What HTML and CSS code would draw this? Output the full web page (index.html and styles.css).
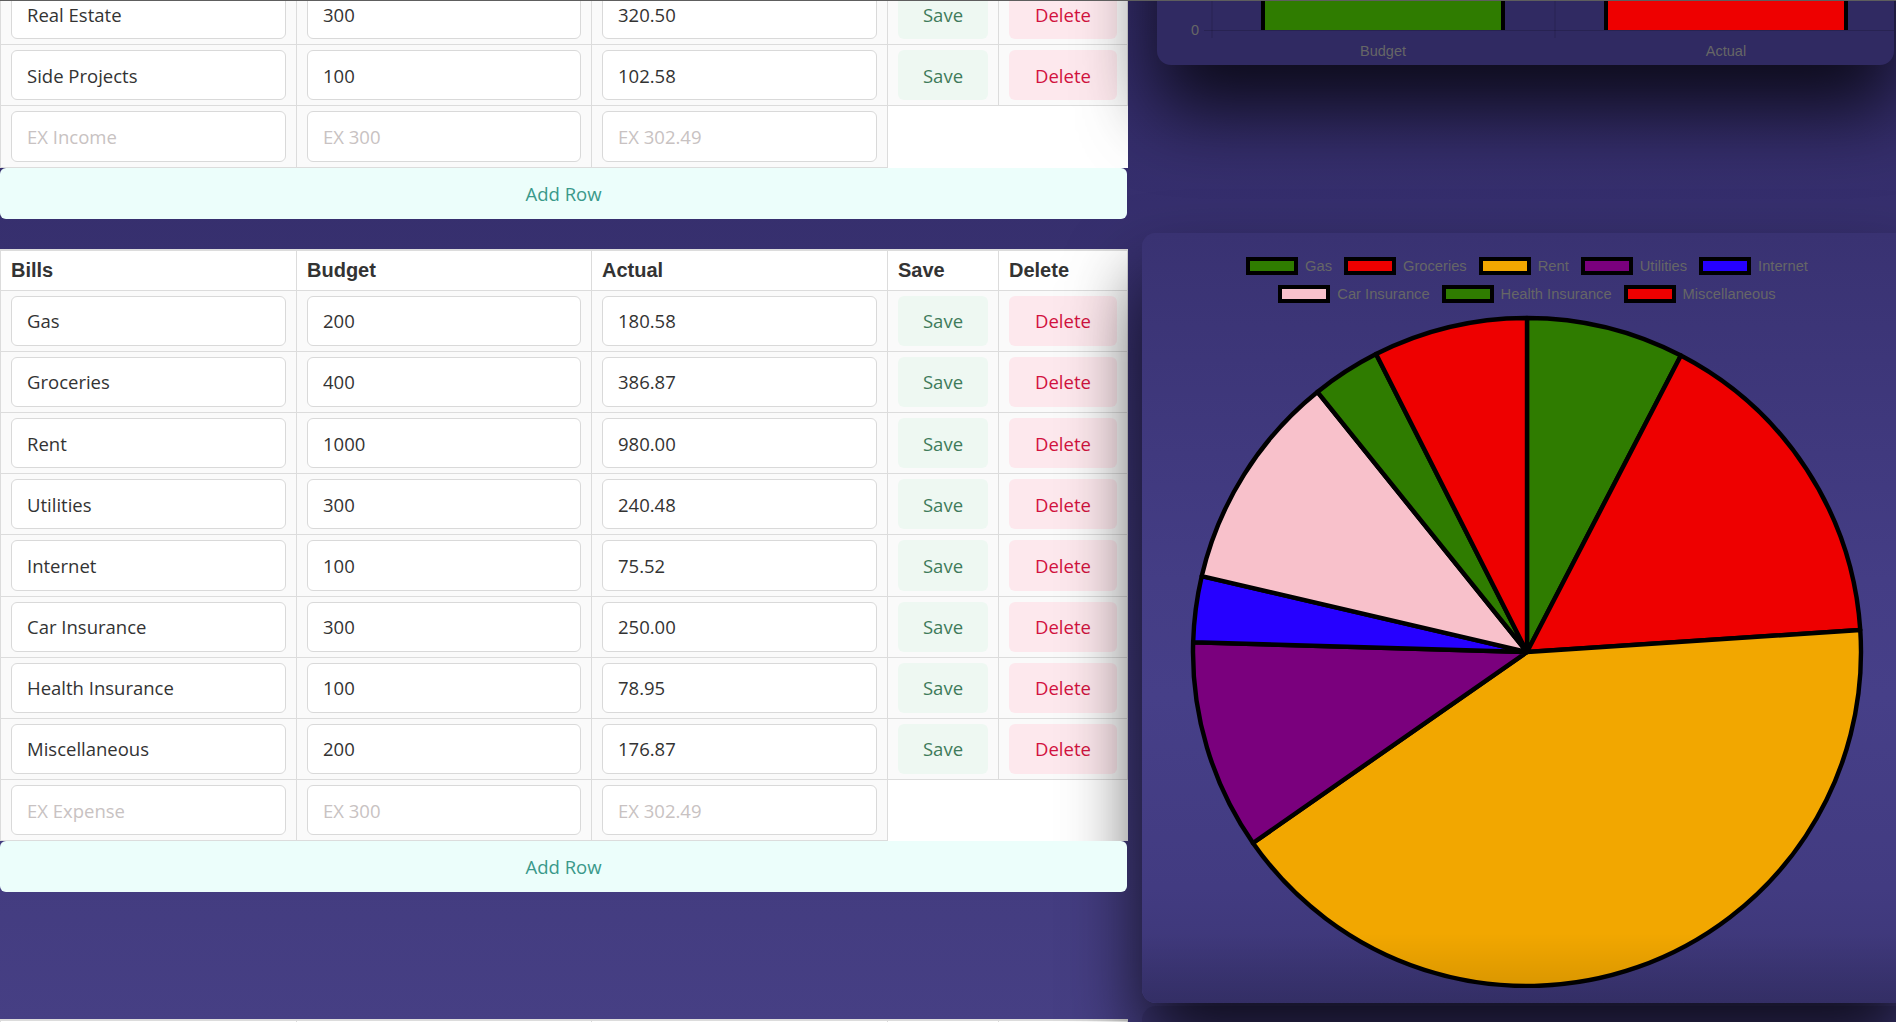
FILE: index.html
```html
<!DOCTYPE html>
<html lang="en">
<head>
<meta charset="utf-8">
<title>Budget</title>
<link rel="stylesheet" href="styles.css">
</head>
<body>
<div class="page">
  <section class="left">
    <table class="budget-table">
      <colgroup><col class="c1"><col class="c2"><col class="c3"><col class="c4"><col class="c5"></colgroup>
      <tbody>
        <tr>
          <td><input class="field" value="Real Estate"></td>
          <td><input class="field" value="300"></td>
          <td><input class="field" value="320.50"></td>
          <td><button class="btn btn-save">Save</button></td>
          <td><button class="btn btn-delete">Delete</button></td>
        </tr>
        <tr>
          <td><input class="field" value="Side Projects"></td>
          <td><input class="field" value="100"></td>
          <td><input class="field" value="102.58"></td>
          <td><button class="btn btn-save">Save</button></td>
          <td><button class="btn btn-delete">Delete</button></td>
        </tr>
        <tr>
          <td><input class="field" placeholder="EX Income"></td>
          <td><input class="field" placeholder="EX 300"></td>
          <td><input class="field" placeholder="EX 302.49"></td>
          <td class="blank" colspan="2"></td>
        </tr>
      </tbody>
    </table>
    <button class="add-row">Add Row</button>

    <table class="budget-table bills-table">
      <colgroup><col class="c1"><col class="c2"><col class="c3"><col class="c4"><col class="c5"></colgroup>
      <thead>
        <tr><th>Bills</th><th>Budget</th><th>Actual</th><th>Save</th><th>Delete</th></tr>
      </thead>
      <tbody>
        <tr>
          <td><input class="field" value="Gas"></td>
          <td><input class="field" value="200"></td>
          <td><input class="field" value="180.58"></td>
          <td><button class="btn btn-save">Save</button></td>
          <td><button class="btn btn-delete">Delete</button></td>
        </tr>
        <tr>
          <td><input class="field" value="Groceries"></td>
          <td><input class="field" value="400"></td>
          <td><input class="field" value="386.87"></td>
          <td><button class="btn btn-save">Save</button></td>
          <td><button class="btn btn-delete">Delete</button></td>
        </tr>
        <tr>
          <td><input class="field" value="Rent"></td>
          <td><input class="field" value="1000"></td>
          <td><input class="field" value="980.00"></td>
          <td><button class="btn btn-save">Save</button></td>
          <td><button class="btn btn-delete">Delete</button></td>
        </tr>
        <tr>
          <td><input class="field" value="Utilities"></td>
          <td><input class="field" value="300"></td>
          <td><input class="field" value="240.48"></td>
          <td><button class="btn btn-save">Save</button></td>
          <td><button class="btn btn-delete">Delete</button></td>
        </tr>
        <tr>
          <td><input class="field" value="Internet"></td>
          <td><input class="field" value="100"></td>
          <td><input class="field" value="75.52"></td>
          <td><button class="btn btn-save">Save</button></td>
          <td><button class="btn btn-delete">Delete</button></td>
        </tr>
        <tr>
          <td><input class="field" value="Car Insurance"></td>
          <td><input class="field" value="300"></td>
          <td><input class="field" value="250.00"></td>
          <td><button class="btn btn-save">Save</button></td>
          <td><button class="btn btn-delete">Delete</button></td>
        </tr>
        <tr>
          <td><input class="field" value="Health Insurance"></td>
          <td><input class="field" value="100"></td>
          <td><input class="field" value="78.95"></td>
          <td><button class="btn btn-save">Save</button></td>
          <td><button class="btn btn-delete">Delete</button></td>
        </tr>
        <tr>
          <td><input class="field" value="Miscellaneous"></td>
          <td><input class="field" value="200"></td>
          <td><input class="field" value="176.87"></td>
          <td><button class="btn btn-save">Save</button></td>
          <td><button class="btn btn-delete">Delete</button></td>
        </tr>
        <tr>
          <td><input class="field" placeholder="EX Expense"></td>
          <td><input class="field" placeholder="EX 300"></td>
          <td><input class="field" placeholder="EX 302.49"></td>
          <td class="blank" colspan="2"></td>
        </tr>
      </tbody>
    </table>
    <button class="add-row">Add Row</button>

    <table class="budget-table next-table">
      <colgroup><col class="c1"><col class="c2"><col class="c3"><col class="c4"><col class="c5"></colgroup>
      <thead><tr><th>&nbsp;</th><th>&nbsp;</th><th>&nbsp;</th><th>&nbsp;</th><th>&nbsp;</th></tr></thead>
    </table>
  </section>

  <aside class="right">
    <div class="card bar-card">
      <svg class="bar-svg" width="737" height="300" viewBox="0 0 737 300">
        <line x1="55" y1="0" x2="55" y2="273" class="grid"/>
        <line x1="398" y1="0" x2="398" y2="273" class="grid"/>
        <line x1="47" y1="265.5" x2="737" y2="265.5" class="grid"/>
        <rect x="104" y="0" width="244" height="265" fill="#000"/>
        <rect x="108" y="0" width="236" height="265" fill="#2f7c00"/>
        <rect x="447" y="0" width="244" height="265" fill="#000"/>
        <rect x="451" y="0" width="236" height="265" fill="#ee0000"/>
        <text x="42" y="270" text-anchor="end" class="axis-text">0</text>
        <text x="226" y="291" text-anchor="middle" class="axis-text">Budget</text>
        <text x="569" y="291" text-anchor="middle" class="axis-text">Actual</text>
      </svg>
    </div>

    <div class="card pie-card">
      <div class="legend">
        <div class="legend-row">
          <span class="legend-item"><i class="swatch sw-green"></i>Gas</span>
          <span class="legend-item"><i class="swatch sw-red"></i>Groceries</span>
          <span class="legend-item"><i class="swatch sw-orange"></i>Rent</span>
          <span class="legend-item"><i class="swatch sw-purple"></i>Utilities</span>
          <span class="legend-item"><i class="swatch sw-blue"></i>Internet</span>
        </div>
        <div class="legend-row">
          <span class="legend-item"><i class="swatch sw-pink"></i>Car Insurance</span>
          <span class="legend-item"><i class="swatch sw-green"></i>Health Insurance</span>
          <span class="legend-item"><i class="swatch sw-red"></i>Miscellaneous</span>
        </div>
      </div>
      <svg class="pie-svg" width="770" height="680" viewBox="0 0 770 680">
        <g stroke="#000" stroke-width="4.4" stroke-linejoin="round" transform="translate(385 344) scale(1.006) translate(-385 -343)">
          <path d="M385 343 L385 11 A332 332 0 0 1 537.98 48.34 Z" fill="#2f7c00"/>
          <path d="M385 343 L537.98 48.34 A332 332 0 0 1 716.28 321.12 Z" fill="#ee0000"/>
          <path d="M385 343 L716.28 321.12 A332 332 0 0 1 112.61 532.82 Z" fill="#f2a700"/>
          <path d="M385 343 L112.61 532.82 A332 332 0 0 1 53.14 333.33 Z" fill="#7a007d"/>
          <path d="M385 343 L53.14 333.33 A332 332 0 0 1 61.70 267.51 Z" fill="#2600ff"/>
          <path d="M385 343 L61.70 267.51 A332 332 0 0 1 176.65 84.51 Z" fill="#f8c1cb"/>
          <path d="M385 343 L176.65 84.51 A332 332 0 0 1 234.93 46.85 Z" fill="#2f7c00"/>
          <path d="M385 343 L234.93 46.85 A332 332 0 0 1 385 11 Z" fill="#ee0000"/>
        </g>
      </svg>
    </div>

    <div class="card next-card"></div>
  </aside>
</div>
</body>
</html>
```

FILE: styles.css
```css
* {
  box-sizing: border-box;
}

html,
body {
  margin: 0;
  height: 1022px;
  overflow: hidden;
}

body {
  background: linear-gradient(180deg, #322b68 0%, #463f84 100%);
  border-top: 1px solid #5e5e5e;
  font-family: "Open Sans", "Noto Sans", sans-serif;
}

.page {
  display: grid;
  grid-template-columns: 1127px 769px;
  align-items: start;
}

/* ---------- left: tables ---------- */

.left {
  margin-top: -18px;
}

.budget-table {
  width: 1127px;
  table-layout: fixed;
  border-collapse: collapse;
  background: #fff;
}

.c1 { width: 296px; }
.c2 { width: 295px; }
.c3 { width: 296px; }
.c4 { width: 111px; }
.c5 { width: 129px; }

.budget-table td {
  border: 1px solid #dcdcdc;
  padding: 5px 10px;
  background: #fafafa;
}

.budget-table td.blank {
  border-left: 1px solid #dcdcdc;
  border-right: none;
  border-bottom: none;
  background: #fff;
}

.budget-table th {
  text-align: left;
  font: bold 20px/23px "Liberation Sans", Arial, sans-serif;
  color: #333;
  padding: 8px 10px;
  background: #fff;
  border: 1px solid #dcdcdc;
  border-top: 2px solid #dcdcdc;
}

.field {
  display: block;
  width: 100%;
  height: 50.2px;
  margin: 0;
  border: 1px solid #d9d9d9;
  border-radius: 6px;
  background: #fff;
  padding: 0 15px;
  font: 18.5px "Open Sans", "Noto Sans", sans-serif;
  color: #333;
  outline: none;
}

.field::placeholder {
  color: #c8c2c2;
}

.btn {
  display: block;
  width: 100%;
  height: 50.2px;
  margin: 0;
  border: 0;
  border-radius: 6px;
  font: 18.5px "Open Sans", "Noto Sans", sans-serif;
  padding: 0;
}

.btn-save {
  background: #eef8f2;
  color: #3f7b5a;
}

.btn-delete {
  background: #fde8ed;
  color: #d2123e;
}

.add-row {
  position: relative;
  z-index: 2;
  display: block;
  width: 1127px;
  height: 51px;
  margin: 0;
  border: 0;
  border-radius: 6px;
  background: #ecfefb;
  color: #3a998a;
  font: 18.5px "Open Sans", "Noto Sans", sans-serif;
  padding: 0;
}

.bills-table {
  margin-top: 30px;
}

.next-table {
  margin-top: 127px;
}

/* ---------- right: chart cards ---------- */

.right {
  margin-top: -236px;
}

.card {
  position: relative;
  z-index: 1;
  border-radius: 14px;
  box-shadow: 0 45px 75px rgba(0, 0, 0, 0.75);
}

.bar-card {
  margin-left: 30px;
  width: 737px;
  height: 300px;
  background: #302a62;
  overflow: hidden;
}

.bar-svg {
  display: block;
}

.grid {
  stroke: rgba(0, 0, 0, 0.16);
  stroke-width: 1;
}

.axis-text {
  font-family: "Liberation Sans", Arial, sans-serif;
  font-size: 14.5px;
  fill: #666;
}

.pie-card {
  margin-top: 168px;
  margin-left: 15px;
  width: 770px;
  height: 770px;
  padding-top: 19px;
  background: linear-gradient(180deg, #393272 0%, #443d85 45%, #463f88 60%, #423b81 85%, #3b3574 100%);
}

.pie-card::after {
  content: "";
  position: absolute;
  left: 0;
  right: 0;
  bottom: 0;
  height: 70px;
  border-radius: 0 0 14px 14px;
  background: linear-gradient(180deg, rgba(0, 0, 0, 0) 0%, rgba(0, 0, 0, 0.13) 100%);
  pointer-events: none;
}

.legend {
  display: flex;
  flex-direction: column;
}

.legend-row {
  display: flex;
  justify-content: center;
  align-items: center;
  gap: 12px;
  height: 28px;
}

.legend-item {
  display: flex;
  align-items: center;
  gap: 7px;
  font-family: "Liberation Sans", Arial, sans-serif;
  font-size: 14.7px;
  color: #666;
}

.swatch {
  display: block;
  width: 52px;
  height: 18px;
  border: 4px solid #000;
}

.sw-green { background: #2f7c00; }
.sw-red { background: #ee0000; }
.sw-orange { background: #f2a700; }
.sw-purple { background: #7a007d; }
.sw-blue { background: #2600ff; }
.sw-pink { background: #f8c1cb; }

.pie-svg {
  display: block;
}

.next-card {
  z-index: 0;
  margin-top: 3px;
  margin-left: 15px;
  width: 770px;
  height: 200px;
  background: #3f3879;
  box-shadow: none;
}
```
